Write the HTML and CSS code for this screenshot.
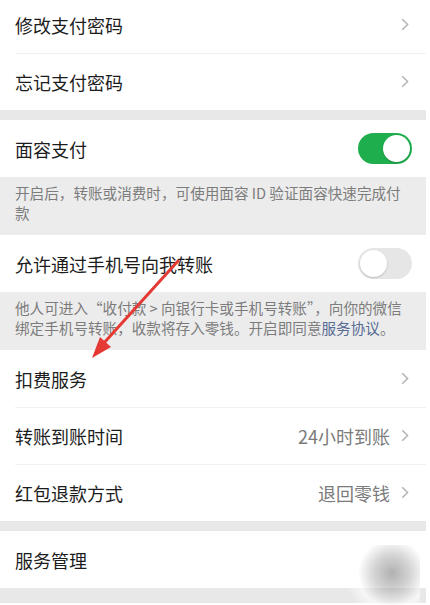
FILE: index.html
```html
<!DOCTYPE html>
<html lang="zh-CN">
<head>
<meta charset="utf-8">
<title>支付设置</title>
<link rel="stylesheet" href="styles.css">
</head>
<body>
<div class="page">
  <div class="group">
    <div class="row row-first">
      <span class="title">修改支付密码</span>
      <svg class="chev" viewBox="0 0 8 13"><path d="M1.2 1.2 L6.6 6.5 L1.2 11.8"/></svg>
    </div>
    <div class="row divided">
      <span class="title">忘记支付密码</span>
      <svg class="chev" viewBox="0 0 8 13"><path d="M1.2 1.2 L6.6 6.5 L1.2 11.8"/></svg>
    </div>
  </div>
  <div class="band"></div>
  <div class="row">
    <span class="title">面容支付</span>
    <span class="switch on"><span class="knob"></span></span>
  </div>
  <div class="note">开启后，转账或消费时，可使用面容 ID 验证面容快速完成付<br>款</div>
  <div class="row">
    <span class="title">允许通过手机号向我转账</span>
    <span class="switch"><span class="knob"></span></span>
  </div>
  <div class="note">他人可进入“收付款 &gt; 向银行卡或手机号转账”，向你的微信<br>绑定手机号转账，收款将存入零钱。开启即同意<span class="link">服务协议</span>。</div>
  <div class="group">
    <div class="row">
      <span class="title">扣费服务</span>
      <svg class="chev" viewBox="0 0 8 13"><path d="M1.2 1.2 L6.6 6.5 L1.2 11.8"/></svg>
    </div>
    <div class="row divided">
      <span class="title">转账到账时间</span>
      <span class="value">24小时到账</span>
      <svg class="chev" viewBox="0 0 8 13"><path d="M1.2 1.2 L6.6 6.5 L1.2 11.8"/></svg>
    </div>
    <div class="row divided">
      <span class="title">红包退款方式</span>
      <span class="value">退回零钱</span>
      <svg class="chev" viewBox="0 0 8 13"><path d="M1.2 1.2 L6.6 6.5 L1.2 11.8"/></svg>
    </div>
  </div>
  <div class="band"></div>
  <div class="row">
    <span class="title">服务管理</span>
  </div>
  <div class="band band-last"></div>
</div>
<svg class="arrow" viewBox="0 0 430 605" width="430" height="605">
  <line x1="178" y1="261" x2="103" y2="344" stroke="#e53a33" stroke-width="3" stroke-linecap="round"/>
  <polygon points="92,358 111,347 100,337" fill="#e53a33"/>
</svg>
<div class="watermark"></div>
</body>
</html>
```
FILE: styles.css
```css
html, body {
  margin: 0;
  padding: 0;
  background: #ffffff;
}
body {
  width: 430px;
  height: 605px;
  overflow: hidden;
  position: relative;
  font-family: "Noto Sans CJK SC", "Noto Sans", sans-serif;
}
.page {
  width: 426px;
  background: #ffffff;
}
.row {
  height: 57px;
  display: flex;
  align-items: center;
  padding: 0 14px 0 15px;
  box-sizing: border-box;
  position: relative;
}
.row-first {
  height: 53px;
  padding-bottom: 4px;
}
.divided::before {
  content: "";
  position: absolute;
  left: 15px;
  right: 0;
  top: 0;
  height: 1px;
  background: #f1f1f1;
}
.title {
  font-size: 18px;
  color: #1c1c1c;
  flex: 1;
  line-height: 1;
}
.value {
  font-size: 18px;
  color: #7b7b7b;
  margin-right: 11px;
  line-height: 1;
}
.chev {
  width: 8px;
  height: 13px;
  margin-right: 3px;
  fill: none;
  stroke: #b3b3b3;
  stroke-width: 1.5;
}
.band {
  height: 10px;
  background: #e8e8e8;
}
.band-last {
  height: 15px;
}
.note {
  background: #ececec;
  color: #7c7c7c;
  font-size: 14.6px;
  line-height: 20px;
  padding: 6px 8px 12px 15px;
  height: 58px;
  box-sizing: border-box;
  white-space: nowrap;
}
.link {
  color: #576b95;
}
.switch {
  width: 54px;
  height: 31px;
  border-radius: 16px;
  background: #e6e6e6;
  box-sizing: border-box;
  padding: 2px;
  display: flex;
  justify-content: flex-start;
}
.switch .knob {
  width: 27px;
  height: 27px;
  border-radius: 50%;
  background: #ffffff;
  box-shadow: 0 1px 2px rgba(0, 0, 0, 0.18);
}
.switch.on {
  background: #1fae4e;
  justify-content: flex-end;
}
.arrow {
  position: absolute;
  left: 0;
  top: 0;
  pointer-events: none;
}
.watermark {
  position: absolute;
  left: 300px;
  top: 545px;
  width: 120px;
  height: 60px;
  background: radial-gradient(circle at 92px 28px, rgba(150, 150, 150, 0.75) 0, rgba(170, 170, 170, 0.5) 18px, rgba(255, 255, 255, 0.6) 34px, rgba(255, 255, 255, 0) 48px);
}
```
